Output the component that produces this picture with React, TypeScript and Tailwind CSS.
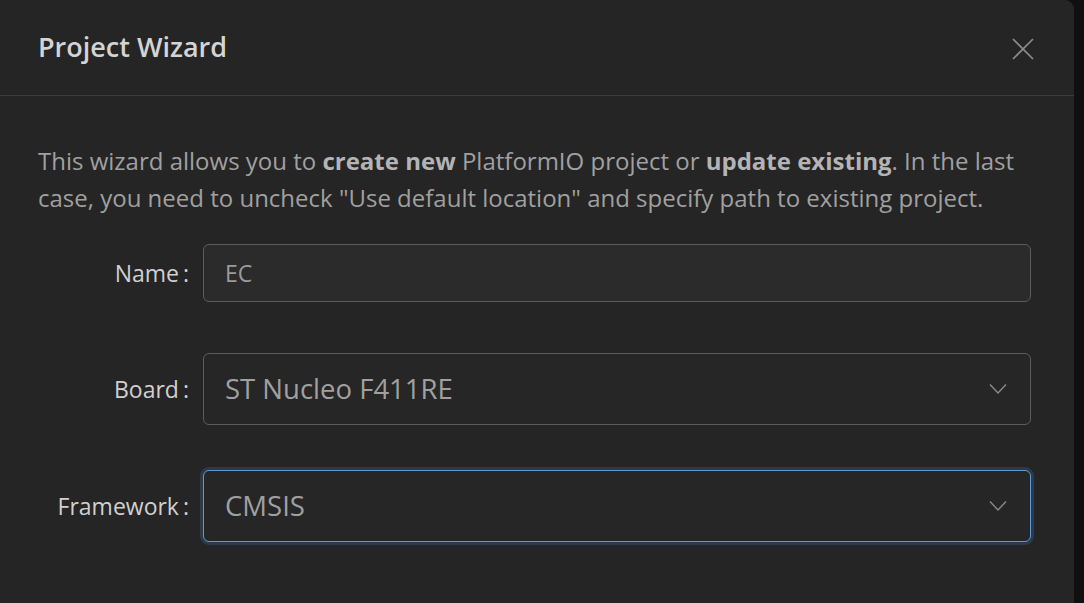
import React from 'react';

const font = { fontFamily: '"Open Sans", "Noto Sans", sans-serif' };

function Chevron() {
  return (
    <svg width="18" height="12" viewBox="0 0 18 12" className="text-[#8a8a8a]">
      <path d="M1 1.5 L9 10 L17 1.5" fill="none" stroke="currentColor" strokeWidth="1.4" />
    </svg>
  );
}

function Label({ text }: { text: string }) {
  return (
    <div className="w-[151px] shrink-0 text-right text-[23px] text-[#d0d0d0]">
      {text}
      <span className="ml-[4px]">:</span>
    </div>
  );
}

export default function App() {
  return (
    <div className="h-[603px] w-[1084px] overflow-hidden bg-[#101010]" style={font}>
      <div className="flex h-full w-[1074px] flex-col rounded-tr-[9px] bg-[#252525]">
        {/* Header */}
        <div className="flex h-[96px] shrink-0 items-center justify-between border-b border-[#3c3c3c] pl-[38px] pr-[40px]">
          <h1 className="text-[27px] font-semibold text-[#d4d4d4]">Project Wizard</h1>
          <svg width="22" height="22" viewBox="0 0 22 22" className="mt-[2px] text-[#8c8c8c]">
            <path d="M1 1 L21 21 M21 1 L1 21" stroke="currentColor" strokeWidth="1.7" />
          </svg>
        </div>

        {/* Body */}
        <div className="px-[38px] pr-[43px] pt-[46px]">
          <p className="text-[24px] leading-[37px] text-[#a0a0a0]">
            This wizard allows you to <b className="font-bold text-[#b4b4b4]">create new</b> PlatformIO project or{' '}
            <b className="font-bold text-[#b4b4b4]">update existing</b>. In the last case, you need to uncheck "Use default
            location" and specify path to existing project.
          </p>

          <div className="mt-[28px] flex items-center gap-[14px]">
            <Label text="Name" />
            <div className="flex h-[58px] flex-1 items-center rounded-[6px] border border-[#5c5c5c] bg-[#2b2b2b] px-[21px] text-[23px] text-[#9a9a9a]">
              EC
            </div>
          </div>

          <div className="mt-[51px] flex items-center gap-[14px]">
            <Label text="Board" />
            <div className="flex h-[72px] flex-1 items-center justify-between rounded-[6px] border border-[#5c5c5c] bg-[#262626] pl-[21px] pr-[23px] text-[27.5px] text-[#a0a0a0]">
              <span>ST Nucleo F411RE</span>
              <Chevron />
            </div>
          </div>

          <div className="mt-[45px] flex items-center gap-[14px]">
            <Label text="Framework" />
            <div className="flex h-[72px] flex-1 items-center justify-between rounded-[6px] border border-[#5b9ad9] bg-[#262626] pl-[21px] pr-[23px] text-[27.5px] text-[#a0a0a0] ring-[3px] ring-[#2c3a4c]">
              <span>CMSIS</span>
              <Chevron />
            </div>
          </div>
        </div>
      </div>
    </div>
  );
}
